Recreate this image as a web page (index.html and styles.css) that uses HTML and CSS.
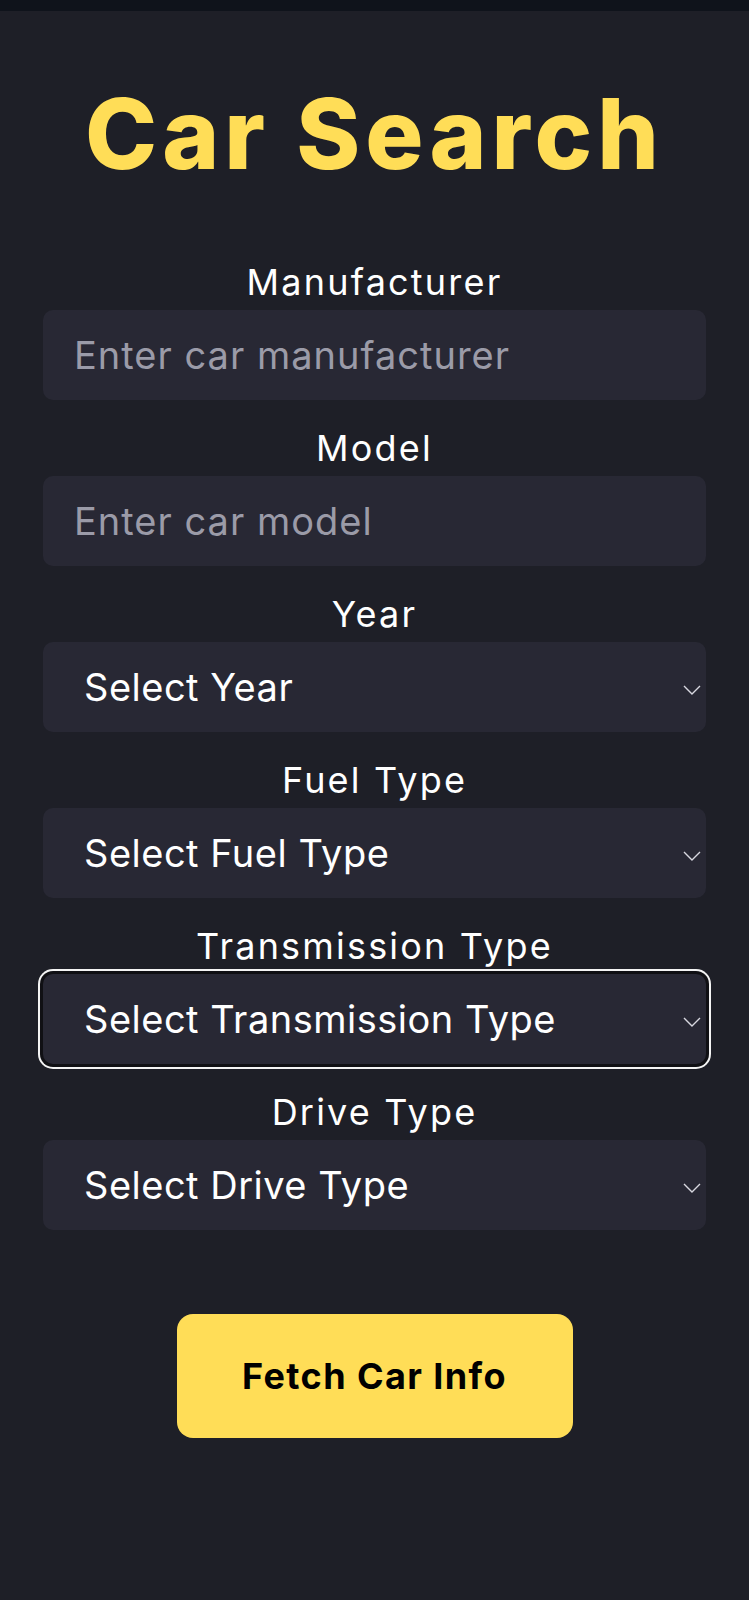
FILE: index.html
```html
<!DOCTYPE html>
<html lang="en">
<head>
<meta charset="utf-8">
<title>Car Search</title>
<link rel="stylesheet" href="styles.css">
</head>
<body>
<div class="topbar"></div>
<main class="page">
  <h1 class="title">Car Search</h1>
  <form class="form">
    <div class="field">
      <label class="label" for="make">Manufacturer</label>
      <input class="control" id="make" type="text" placeholder="Enter car manufacturer">
    </div>
    <div class="field">
      <label class="label" for="model">Model</label>
      <input class="control" id="model" type="text" placeholder="Enter car model">
    </div>
    <div class="field">
      <label class="label" for="year">Year</label>
      <div class="select-wrap">
        <select class="control select" id="year"><option>Select Year</option></select>
        <svg class="chev" viewBox="0 0 18 10" width="18" height="10"><path d="M1 1l8 8 8-8" fill="none" stroke="#d8d8e0" stroke-width="1.4"/></svg>
      </div>
    </div>
    <div class="field">
      <label class="label" for="fuel">Fuel Type</label>
      <div class="select-wrap">
        <select class="control select" id="fuel"><option>Select Fuel Type</option></select>
        <svg class="chev" viewBox="0 0 18 10" width="18" height="10"><path d="M1 1l8 8 8-8" fill="none" stroke="#d8d8e0" stroke-width="1.4"/></svg>
      </div>
    </div>
    <div class="field">
      <label class="label" for="trans">Transmission Type</label>
      <div class="select-wrap">
        <select class="control select focused" id="trans"><option>Select Transmission Type</option></select>
        <svg class="chev" viewBox="0 0 18 10" width="18" height="10"><path d="M1 1l8 8 8-8" fill="none" stroke="#d8d8e0" stroke-width="1.4"/></svg>
      </div>
    </div>
    <div class="field">
      <label class="label" for="drive">Drive Type</label>
      <div class="select-wrap">
        <select class="control select" id="drive"><option>Select Drive Type</option></select>
        <svg class="chev" viewBox="0 0 18 10" width="18" height="10"><path d="M1 1l8 8 8-8" fill="none" stroke="#d8d8e0" stroke-width="1.4"/></svg>
      </div>
    </div>
    <div class="actions">
      <button class="btn" type="button">Fetch Car Info</button>
    </div>
  </form>
</main>
</body>
</html>
```
FILE: styles.css
```css
* { box-sizing: border-box; }
html, body { margin: 0; padding: 0; }
body {
  background: #1e1f27;
  min-height: 1600px;
  font-family: "Inter", "Noto Sans", sans-serif;
  color: #ffffff;
}
.topbar {
  height: 11px;
  background: #0f131b;
}
.page {
  padding: 0 43px;
}
.title {
  margin: 63px 0 0;
  text-align: center;
  font-size: 97px;
  line-height: 120px;
  font-weight: 800;
  color: #ffdd57;
  letter-spacing: 5px;
}
.form {
  margin-top: 64px;
  display: flex;
  flex-direction: column;
}
.field {
  display: flex;
  flex-direction: column;
  margin-bottom: 24px;
}
.label {
  display: block;
  text-align: center;
  font-size: 36px;
  line-height: 48px;
  height: 48px;
  margin-bottom: 4px;
  font-weight: 400;
  letter-spacing: 2.2px;
}
.control {
  display: block;
  width: 100%;
  height: 90px;
  border: none;
  border-radius: 10px;
  background: #282834;
  color: #ffffff;
  font-family: inherit;
  font-size: 38px;
  letter-spacing: 1px;
  padding: 0 20px 0 31px;
  outline: none;
}
.control::placeholder {
  color: #9b9ba8;
}
.select-wrap {
  position: relative;
}
.select {
  -webkit-appearance: none;
  appearance: none;
  padding-left: 41px;
  letter-spacing: 0.5px;
}
.focused {
  box-shadow: 0 0 0 3px #101014, 0 0 0 5px #f4f4f4;
}
.chev {
  position: absolute;
  right: 5px;
  top: 43px;
}
.actions {
  display: flex;
  justify-content: center;
  margin-top: 60px;
}
.btn {
  width: 396px;
  height: 124px;
  border: none;
  border-radius: 16px;
  background: #ffdd57;
  color: #000000;
  font-family: inherit;
  font-size: 36px;
  font-weight: 700;
  letter-spacing: 1.4px;
}
```
